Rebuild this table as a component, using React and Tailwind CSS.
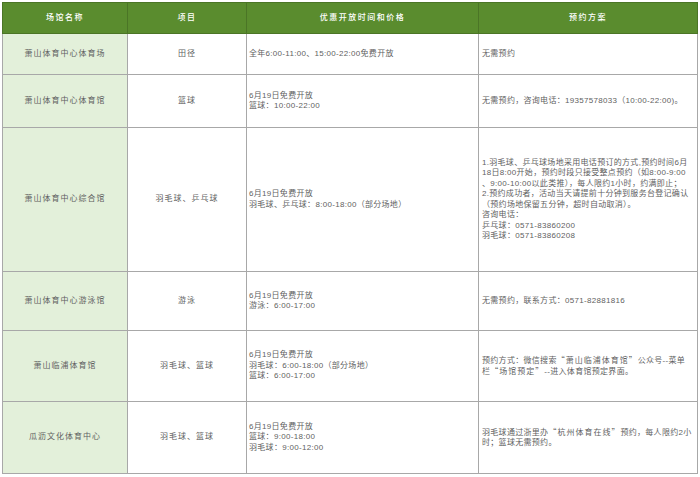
import React from 'react';

const Q = ({ children }) => (
  <span className="font-['Noto_Sans_CJK_SC'] tracking-[1px]">“{children}”</span>
);

const rows = [
  {
    h: 'h-[41px]',
    name: '萧山体育中心体育场',
    sport: '田径',
    time: ['全年6:00-11:00、15:00-22:00免费开放'],
    plan: ['无需预约'],
  },
  {
    h: 'h-[53px]',
    name: '萧山体育中心体育馆',
    sport: '篮球',
    time: ['6月19日免费开放', '篮球：10:00-22:00'],
    plan: ['无需预约，咨询电话：19357578033（10:00-22:00)。'],
  },
  {
    h: 'h-[144px]',
    name: '萧山体育中心综合馆',
    sport: '羽毛球、乒乓球',
    time: ['6月19日免费开放', '羽毛球、乒乓球：8:00-18:00（部分场地）'],
    plan: [
      '1.羽毛球、乒乓球场地采用电话预订的方式,预约时间6月',
      '18日8:00开始，预约时段只接受整点预约（如8:00-9:00',
      '、9:00-10:00以此类推），每人限约1小时，约满即止；',
      '2.预约成功者，活动当天请提前十分钟到服务台登记确认',
      '（预约场地保留五分钟，超时自动取消）。',
      '咨询电话：',
      '乒乓球：0571-83860200',
      '羽毛球：0571-83860208',
    ],
  },
  {
    h: 'h-[59px]',
    name: '萧山体育中心游泳馆',
    sport: '游泳',
    time: ['6月19日免费开放', '游泳：6:00-17:00'],
    plan: ['无需预约，联系方式：0571-82881816'],
  },
  {
    h: 'h-[71px]',
    name: '萧山临浦体育馆',
    sport: '羽毛球、篮球',
    time: ['6月19日免费开放', '羽毛球：6:00-18:00（部分场地）', '篮球：6:00-17:00'],
    plan: [
      <>预约方式：微信搜索<Q>萧山临浦体育馆</Q>公众号--菜单</>,
      <>栏<Q>场馆预定</Q>--进入体育馆预定界面。</>,
    ],
  },
  {
    h: 'h-[72px]',
    name: '瓜沥文化体育中心',
    sport: '羽毛球、篮球',
    time: ['6月19日免费开放', '篮球：9:00-18:00', '羽毛球：9:00-12:00'],
    plan: [<>羽毛球通过浙里办<Q>杭州体育在线</Q>预约，每人限约2小</>, '时；篮球无需预约。'],
  },
];

const Lines = ({ lines }) => (
  <>
    {lines.map((l, i) => (
      <div key={i} className="whitespace-nowrap">{l}</div>
    ))}
  </>
);

export default function App() {
  return (
    <div
      className="w-[700px] h-[477px] bg-white overflow-hidden pt-[2px] pl-[2px]"
      style={{ fontFamily: '"Liberation Sans", "Noto Sans CJK SC", sans-serif' }}
    >
      <table className="table-fixed border-collapse w-[695px] text-[8px] leading-[10.5px] tracking-[0.3px] text-[#5f5f5f]">
        <colgroup>
          <col className="w-[125px]" />
          <col className="w-[119px]" />
          <col className="w-[232px]" />
          <col className="w-[219px]" />
        </colgroup>
        <thead>
          <tr className="h-[31px] bg-[#5a8c2e] text-white tracking-[1.5px]">
            <th className="border border-[#4b7526] text-center font-medium">场馆名称</th>
            <th className="border border-[#4b7526] text-center font-medium">项目</th>
            <th className="border border-[#4b7526] text-center font-medium">优惠开放时间和价格</th>
            <th className="border border-[#4b7526] text-center font-medium">预约方案</th>
          </tr>
        </thead>
        <tbody>
          {rows.map((r, i) => (
            <tr key={i} className={r.h}>
              <td className="border border-[#a8a8a8] bg-[#e3f0da] text-center align-middle tracking-[1px]">
                {r.name}
              </td>
              <td className="border border-[#a8a8a8] text-center align-middle tracking-[1px]">{r.sport}</td>
              <td className="border border-[#a8a8a8] align-middle pl-[2px]">
                <Lines lines={r.time} />
              </td>
              <td className="border border-[#a8a8a8] align-middle pl-[3px]">
                <Lines lines={r.plan} />
              </td>
            </tr>
          ))}
        </tbody>
      </table>
    </div>
  );
}
